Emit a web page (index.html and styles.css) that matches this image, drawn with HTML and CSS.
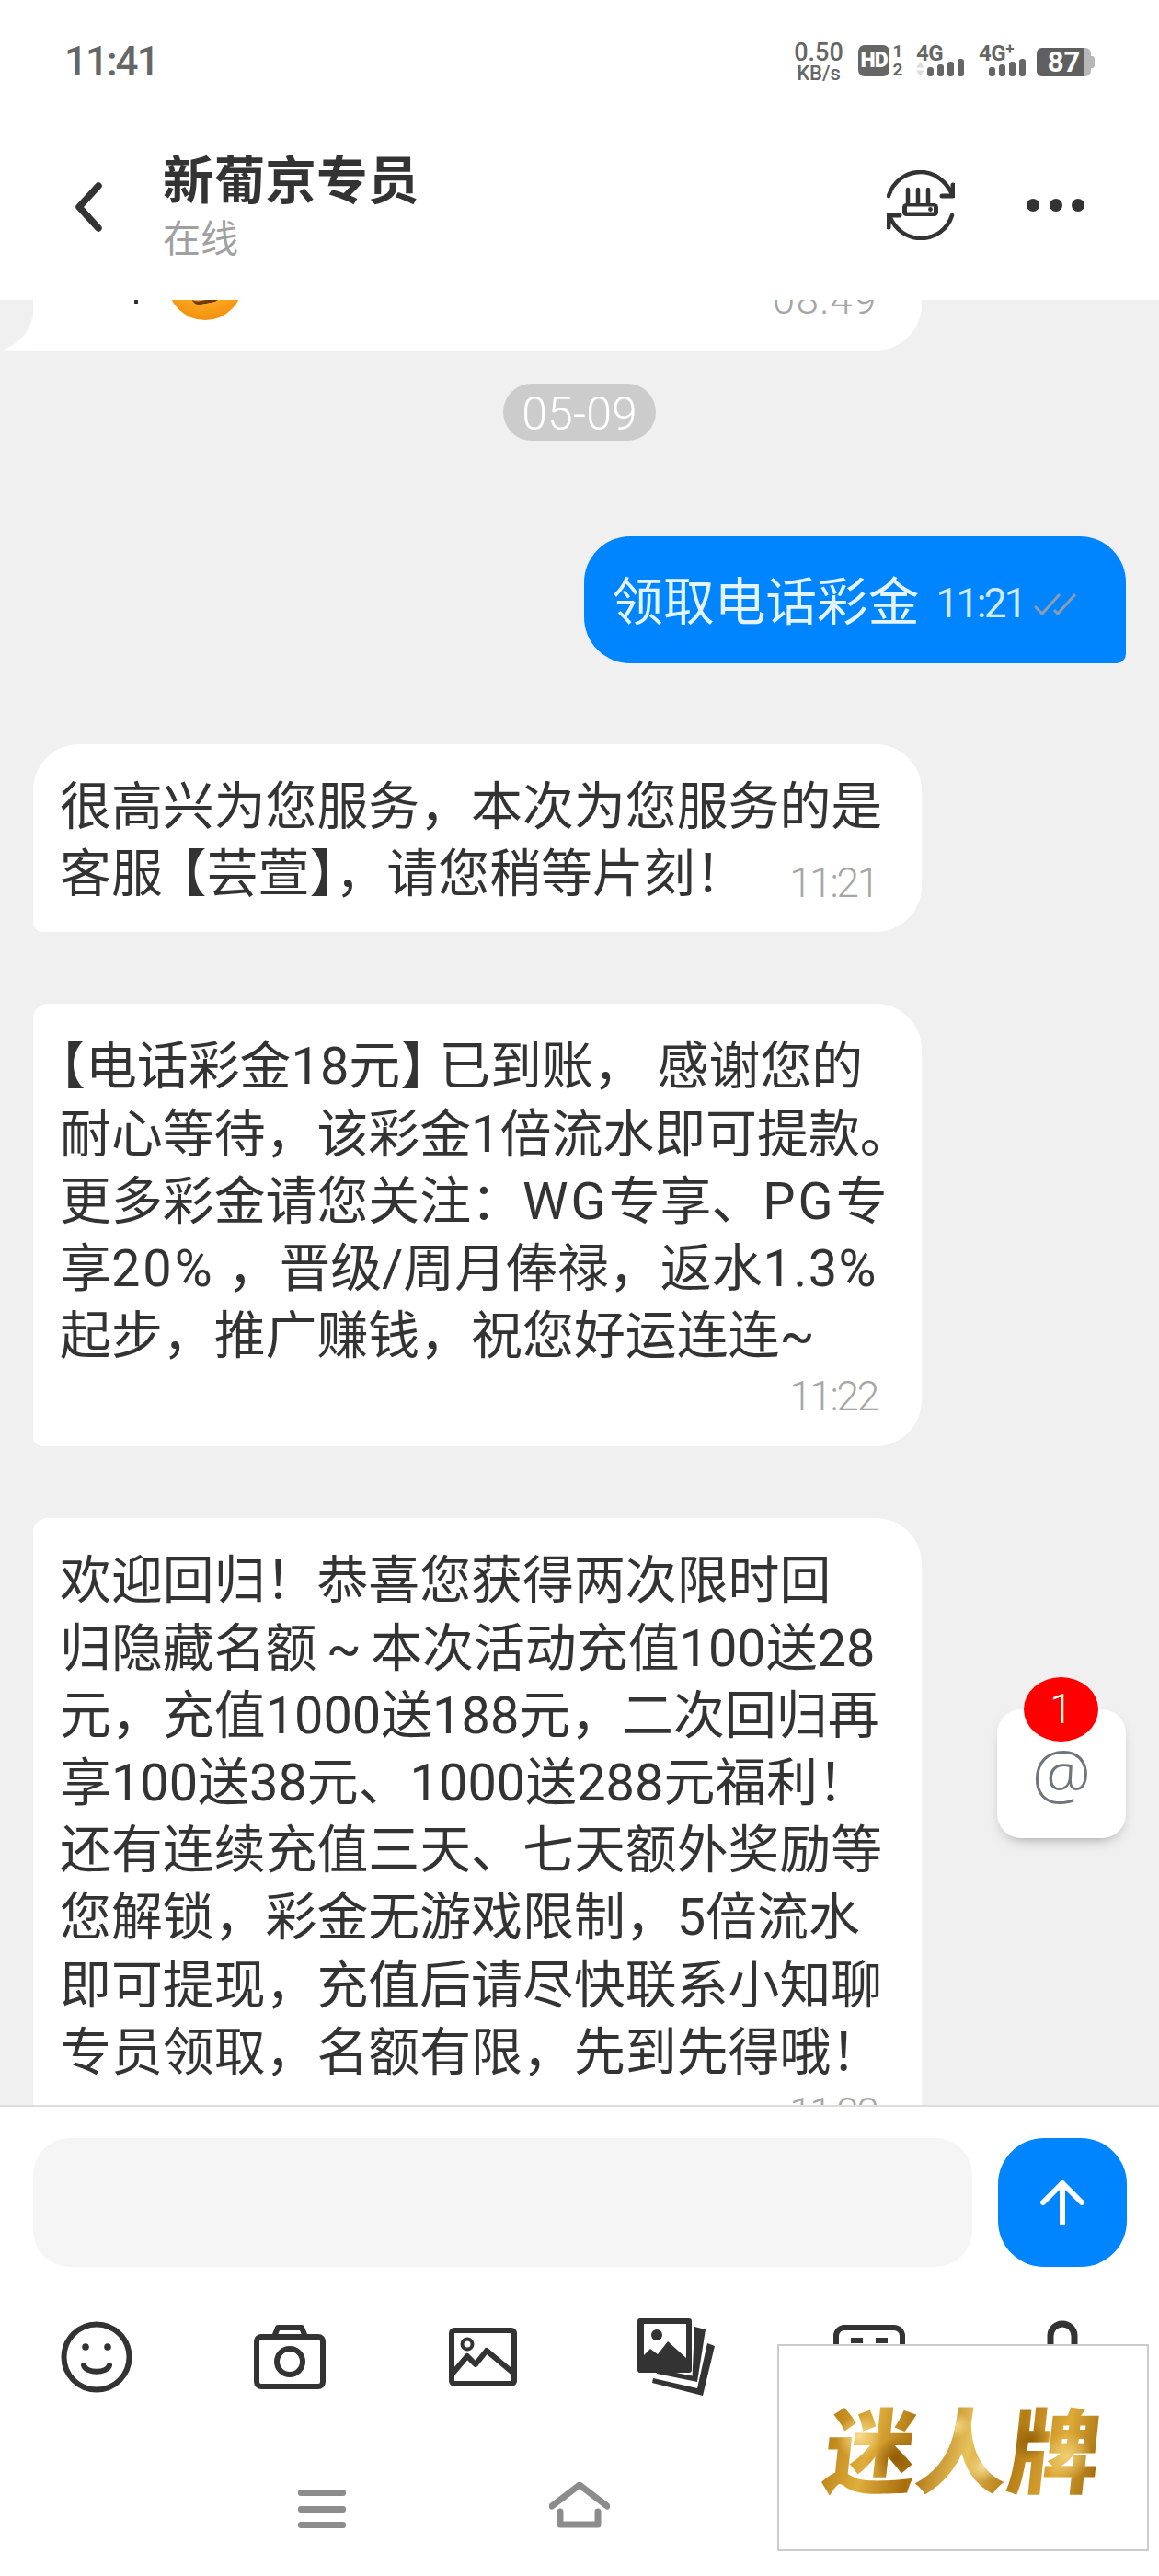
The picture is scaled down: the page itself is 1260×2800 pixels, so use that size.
FILE: index.html
```html
<!DOCTYPE html>
<html lang="zh-CN">
<head>
    <meta charset="UTF-8">
    <meta name="viewport" content="width=device-width, initial-scale=1.0">
    <title>新葡京专员</title>
    <link rel="stylesheet" href="styles.css">
</head>
<body>
    <div class="app">
        <header class="header">
            <div class="status-bar">
                <span class="clock">11:41</span>
                <div class="status-icons">
                    <div class="speed"><span>0.50</span><span class="speed-unit">KB/s</span></div>
                    <div class="hd"><span class="hd-box">HD</span><span class="hd-nums"><span>1</span><span>2</span></span></div>
                    <div class="signal signal-first">
                        <span class="net">4G</span>
                        <svg class="bars" width="52" height="34" viewBox="0 0 52 34">
                            <path d="M0 24.5l4.5-6 4.5 6zM0 27.5h9l-4.5 6z" fill="#dcdcdc"/>
                            <g fill="#666">
                                <rect x="12" y="24" width="7" height="10" rx="3"/>
                                <rect x="23" y="21" width="7" height="13" rx="3"/>
                                <rect x="34" y="18" width="7" height="16" rx="3"/>
                                <rect x="45" y="15" width="7" height="19" rx="3"/>
                            </g>
                        </svg>
                    </div>
                    <div class="signal">
                        <span class="net">4G<sup>+</sup></span>
                        <svg class="bars" width="41" height="34" viewBox="11 0 41 34">
                            <g fill="#666">
                                <rect x="12" y="24" width="7" height="10" rx="3"/>
                                <rect x="23" y="21" width="7" height="13" rx="3"/>
                                <rect x="34" y="18" width="7" height="16" rx="3"/>
                                <rect x="45" y="15" width="7" height="19" rx="3"/>
                            </g>
                        </svg>
                    </div>
                    <div class="battery"><span class="battery-level">87</span></div>
                </div>
            </div>
            <div class="top-bar">
                <svg class="back" width="32" height="54" viewBox="0 0 32 54">
                    <path d="M26 4L5 27l21 23" fill="none" stroke="#333" stroke-width="7.5" stroke-linecap="round" stroke-linejoin="round"/>
                </svg>
                <div class="peer">
                    <div class="peer-name">新葡京专员</div>
                    <div class="peer-state">在线</div>
                </div>
                <svg class="sync" width="74" height="76" viewBox="0 0 74 76">
                    <g fill="none" stroke="#333" stroke-width="4.5" stroke-linecap="round" stroke-linejoin="round">
                        <path d="M2 28C7 12 21 2 37 2c14 0 27 9 34 24"/>
                        <path d="M72 16v12H60" stroke-width="5"/>
                        <path d="M71 49C66 65 52 74 37 74 23 74 10 66 3 50"/>
                        <path d="M2 62V49h12" stroke-width="5"/>
                        <path d="M23 21v15M34 21v15M45 21v15"/>
                    </g>
                    <rect x="17" y="36" width="39" height="14" rx="4.5" fill="#333"/>
                    <rect x="22" y="39.5" width="29" height="6" fill="#fff"/>
                    <circle cx="47.5" cy="42.5" r="2.4" fill="#333"/>
                </svg>
                <div class="more"><i></i><i></i><i></i></div>
            </div>
        </header>

        <main class="chat">
            <div class="bubble bubble-prev">
                <span class="clip-dot"></span>
                <span class="emoji"><i></i></span>
                <span class="time time-prev">08:49</span>
                <svg class="tail" width="36" height="60" viewBox="0 0 36 60">
                    <path d="M36 0C36 24 30 50 0 59.5L36 60z" fill="#fff"/>
                </svg>
            </div>

            <div class="date-row"><span class="date">05-09</span></div>

            <div class="bubble-sent">
                <span class="sent-text">领取电话彩金</span>
                <span class="time time-sent">11:21</span>
                <svg class="ticks" width="46" height="24" viewBox="0 0 46 24">
                    <path d="M1 14l8 8L28 1M22 18l4 4L45 1" fill="none" stroke="#8c9cab" stroke-width="3"/>
                </svg>
            </div>

            <div class="bubble bubble-in first">
                很高兴为您服务，本次为您服务的是<br>
                <div class="last-line">
                    <span>客服<span class="bracket bracket-gap">【</span>芸萱<span class="bracket">】</span>，请您稍等片刻！</span>
                    <span class="time time-narrow">11:21</span>
                </div>
            </div>

            <div class="bubble bubble-in">
                <span class="bracket">【</span>电话彩金18元<span class="bracket bracket-after">】</span>已到账， 感谢您的<br>
                耐心等待，该彩金1倍流水即可提款。<br>
                更多彩金请您关注：<span class="latin-wide">WG</span>专享、<span class="latin-wide">PG</span>专<br>
                享<span class="latin-wide">20%</span> ，晋级/周月俸禄，返水<span class="latin-mid">1.3%</span><br>
                起步，推广赚钱，祝您好运连连~
                <div class="time-row"><span class="time time-narrow">11:22</span></div>
            </div>

            <div class="bubble bubble-in">
                欢迎回归！恭喜您获得两次限时回<br>
                归隐藏名额<span class="tilde"> ~ </span>本次活动充值100送28<br>
                元，充值1000送188元，二次回归再<br>
                享100送38元、1000送288元福利！<br>
                还有连续充值三天、七天额外奖励等<br>
                您解锁，彩金无游戏限制，5倍流水<br>
                即可提现，充值后请尽快联系小知聊<br>
                专员领取，名额有限，先到先得哦！
                <div class="time-row"><span class="time time-narrow">11:22</span></div>
            </div>

            <div class="mention">
                <span class="mention-badge">1</span>
                <span class="mention-at">@</span>
            </div>
        </main>

        <footer class="composer">
            <div class="input-row">
                <div class="input-box"></div>
                <div class="send">
                    <svg width="48" height="48" viewBox="0 0 48 48">
                        <path d="M24 46V3M3 24L24 3l21 21" fill="none" stroke="#fff" stroke-width="6" stroke-linecap="round" stroke-linejoin="round"/>
                    </svg>
                </div>
            </div>
            <div class="tools">
                <svg width="78" height="78" viewBox="0 0 78 78">
                    <circle cx="39" cy="39" r="35.5" fill="none" stroke="#333" stroke-width="6"/>
                    <circle cx="27" cy="28" r="3.8" fill="#333"/>
                    <circle cx="51" cy="28" r="3.8" fill="#333"/>
                    <path d="M25 48c3 9 25 9 28 0" fill="none" stroke="#333" stroke-width="6" stroke-linecap="round"/>
                </svg>
                <svg width="78" height="70" viewBox="0 0 78 70">
                    <rect x="3" y="13" width="72" height="54" rx="5" fill="none" stroke="#333" stroke-width="6"/>
                    <path d="M22 13l4-10h26l4 10" fill="none" stroke="#333" stroke-width="6" stroke-linejoin="round"/>
                    <circle cx="39" cy="40" r="14" fill="none" stroke="#333" stroke-width="6"/>
                </svg>
                <svg width="74" height="64" viewBox="0 0 74 64">
                    <rect x="3" y="3" width="68" height="58" rx="3" fill="none" stroke="#333" stroke-width="6"/>
                    <circle cx="20" cy="18" r="5.5" fill="none" stroke="#333" stroke-width="4"/>
                    <path d="M3 51l17-20 9 9 12-15 31 26" fill="none" stroke="#333" stroke-width="6" stroke-linejoin="round"/>
                </svg>
                <svg width="84" height="84" viewBox="0 0 84 84">
                    <path d="M62 9l12 3-9 57-44-9 .6-5 38 7.4z" fill="#333"/>
                    <path d="M76 27l8 3-13 54-55-14 1-5 48 11z" fill="#333"/>
                    <rect x="0" y="0" width="59" height="59" rx="3" fill="#333"/>
                    <rect x="7" y="6" width="46" height="37" fill="#fff"/>
                    <circle cx="21" cy="18" r="6" fill="#333"/>
                    <path d="M7 40l7-7 8 6 11-14 20 18v5H7z" fill="#333"/>
                </svg>
                <svg width="78" height="70" viewBox="0 0 78 70">
                    <rect x="3" y="3" width="72" height="60" rx="9" fill="none" stroke="#333" stroke-width="6"/>
                    <path d="M19 17h13M46 17h13" stroke="#333" stroke-width="6"/>
                </svg>
                <svg width="34" height="80" viewBox="0 0 34 80">
                    <path d="M4 60V17a13 13 0 0 1 26 0v43" fill="none" stroke="#333" stroke-width="7"/>
                </svg>
            </div>
            <div class="nav">
                <div class="nav-menu"><i></i><i></i><i></i></div>
                <svg width="66" height="50" viewBox="0 0 66 50">
                    <path d="M3 26L33 3l30 23" fill="none" stroke="#8c8c8c" stroke-width="7" stroke-linecap="round" stroke-linejoin="round"/>
                    <path d="M12 32v14h41V32" fill="none" stroke="#8c8c8c" stroke-width="7" stroke-linecap="round" stroke-linejoin="round"/>
                </svg>
                <span></span>
            </div>
        </footer>

        <div class="watermark"><span class="watermark-text">迷人牌</span></div>
    </div>
</body>
</html>
```

FILE: styles.css
```css
* {
    box-sizing: border-box;
}

body {
    margin: 0;
    background-color: #fff;
    color: #333;
    font-family: Roboto, "Noto Sans CJK SC", sans-serif;
}

.app {
    position: relative;
    display: flex;
    flex-direction: column;
    width: 1260px;
    height: 2800px;
    overflow: hidden;
}

/* header */
.header {
    height: 326px;
    flex-shrink: 0;
    background-color: #fff;
}

.status-bar {
    display: flex;
    align-items: center;
    justify-content: space-between;
    height: 132px;
    padding: 0 74px 0 70px;
    color: #666;
}

.clock {
    margin-top: 2px;
    font-size: 44px;
    font-weight: 500;
    letter-spacing: -2px;
}

.status-icons {
    display: flex;
    align-items: center;
    font-weight: 500;
}

.speed {
    display: flex;
    flex-direction: column;
    align-items: center;
    width: 56px;
    margin-top: 4px;
    font-size: 27px;
    line-height: 23px;
}

.speed-unit {
    font-size: 22px;
    line-height: 22px;
}

.hd {
    display: flex;
    align-items: center;
    margin-left: 15px;
}

.hd-box {
    width: 34px;
    height: 34px;
    border-radius: 7px;
    background-color: #666;
    color: #fff;
    font-size: 23px;
    font-weight: 900;
    line-height: 34px;
    text-align: center;
    letter-spacing: -1px;
}

.hd-nums {
    display: flex;
    flex-direction: column;
    width: 12px;
    margin-left: 3px;
    font-size: 19px;
    font-weight: 700;
    line-height: 20px;
    text-align: center;
}

.signal {
    position: relative;
    display: flex;
    justify-content: flex-end;
    width: 52px;
    height: 34px;
    margin-left: 14px;
}

.signal + .signal {
    width: 51px;
    margin-left: 16px;
}

.net {
    position: absolute;
    top: -3px;
    left: 0;
    font-size: 24px;
    font-weight: 700;
    line-height: 24px;
    letter-spacing: -0.5px;
}

.net sup {
    font-size: 17px;
    line-height: 0;
    vertical-align: 7px;
}

.battery {
    position: relative;
    width: 59px;
    height: 31px;
    margin-top: 3px;
    margin-left: 12px;
    border-radius: 6px;
    background-color: #b8b8b8;
}

.battery::after {
    content: "";
    position: absolute;
    top: 9px;
    right: -4px;
    width: 4px;
    height: 13px;
    border-radius: 0 3px 3px 0;
    background-color: #b8b8b8;
}

.battery-level {
    display: block;
    width: 51px;
    height: 31px;
    padding-left: 8px;
    border-radius: 6px 0 0 6px;
    background-color: #5f5f5f;
    color: #fff;
    font-size: 31px;
    font-weight: 700;
    line-height: 31px;
    text-align: center;
}

.top-bar {
    display: flex;
    align-items: center;
    height: 182px;
    padding-left: 81px;
}

.back {
    flex-shrink: 0;
    margin-top: 4px;
}

.peer {
    flex: 1;
    margin-left: 64px;
    padding-top: 8px;
}

.peer-name {
    color: #333;
    font-size: 55.7px;
    font-weight: 700;
    line-height: 66px;
}

.peer-state {
    color: #a0a0a0;
    font-size: 41px;
    font-weight: 400;
    line-height: 60px;
}

.sync {
    flex-shrink: 0;
}

.more {
    display: flex;
    gap: 10.5px;
    margin: 0 81px 0 78px;
}

.more i {
    width: 14px;
    height: 14px;
    border-radius: 50%;
    background-color: #333;
}

/* chat */
.chat {
    position: relative;
    flex: 1;
    display: flex;
    flex-direction: column;
    align-items: flex-start;
    min-height: 0;
    padding: 0 36px;
    overflow: hidden;
    background-color: #f0f0f0;
}

.bubble {
    flex-shrink: 0;
    position: relative;
    width: 966px;
    background-color: #fff;
}

.bubble-prev {
    display: flex;
    height: 115px;
    margin-top: -60px;
    border-radius: 0 0 50px 0;
}

.clip-dot {
    position: absolute;
    top: 60px;
    left: 110px;
    width: 4px;
    height: 4px;
    background-color: #333;
}

.emoji {
    position: absolute;
    top: 0;
    left: 146px;
    width: 82px;
    height: 82px;
    border-radius: 50%;
    background: radial-gradient(circle at 50% 30%, #ffc73a 0%, #fba21c 60%, #ea8200 100%);
}

.emoji i {
    position: absolute;
    top: 56px;
    left: 27px;
    width: 30px;
    height: 8px;
    border-bottom: 4px solid #6d3a08;
    border-radius: 0 0 20px 20px;
    transform: rotate(-10deg);
}

.tail {
    position: absolute;
    bottom: 0;
    left: -34px;
}

.time {
    color: #a6a6a6;
    font-size: 44px;
    font-weight: 300;
    line-height: 44px;
}

.time-prev {
    position: absolute;
    top: 38px;
    right: 48px;
    letter-spacing: 1.5px;
}

.time-narrow {
    letter-spacing: -2.2px;
}

.date-row {
    align-self: center;
    flex-shrink: 0;
    margin-top: 36px;
}

.date {
    display: block;
    height: 62px;
    padding: 0 20px;
    border-radius: 31px;
    background-color: #ccc;
    color: #fff;
    font-size: 50px;
    font-weight: 300;
    line-height: 66px;
}

.bubble-sent {
    align-self: flex-end;
    flex-shrink: 0;
    display: flex;
    align-items: center;
    height: 138px;
    margin-top: 104px;
    padding: 6px 54px 0 30px;
    border-radius: 50px 50px 10px 50px;
    background-color: #0085ff;
}

.sent-text {
    color: #e3f4ff;
    font-size: 55.7px;
    font-weight: 400;
    line-height: 73px;
}

.time-sent {
    margin-left: 18px;
    color: #cfeaff;
    font-weight: 400;
    letter-spacing: -2.6px;
    position: relative;
    top: 1px;
}

.ticks {
    margin-left: 10px;
    position: relative;
    top: 2px;
}

.bubble-in {
    margin-top: 78px;
    padding: 32px 30px 26px 29px;
    border-radius: 16px 50px 50px 10px;
    font-size: 55.9px;
    font-weight: 400;
    line-height: 73.2px;
    white-space: nowrap;
}

.bubble-in.first {
    margin-top: 88px;
    border-top-left-radius: 50px;
}

.bracket {
    font-feature-settings: "halt";
}

.bracket-gap {
    margin-left: 20px;
}

.bracket-after {
    margin-right: 14px;
}

.latin-wide {
    letter-spacing: 3px;
}

.latin-mid {
    letter-spacing: 1.5px;
}

.tilde {
    word-spacing: -3.5px;
}

.last-line {
    display: flex;
    align-items: center;
    justify-content: space-between;
    padding-right: 18px;
}

.last-line .time {
    position: relative;
    top: 9px;
}

.time-row {
    margin-top: 3px;
    padding-right: 18px;
    padding-bottom: 6px;
    text-align: right;
    line-height: 44px;
}

/* floating mention button */
.mention {
    position: absolute;
    top: 1532px;
    left: 1084px;
    width: 140px;
    height: 140px;
    border-radius: 26px;
    background-color: #fff;
    box-shadow: 0 7px 16px -9px rgba(0, 0, 0, 0.5);
    text-align: center;
}

.mention-badge {
    position: absolute;
    top: -35px;
    left: 29px;
    width: 81px;
    height: 70px;
    border-radius: 50%;
    background-color: #f00;
    color: #fff;
    font-size: 44px;
    font-weight: 300;
    line-height: 70px;
}

.mention-at {
    position: absolute;
    top: 26px;
    left: 0;
    right: 0;
    color: #6f757b;
    font-family: "Open Sans", sans-serif;
    font-size: 72px;
    font-weight: 300;
    line-height: 84px;
}

/* composer */
.composer {
    height: 512px;
    flex-shrink: 0;
    border-top: 2px solid #ddd;
    background-color: #fff;
}

.input-row {
    display: flex;
    gap: 28px;
    padding: 34px 35px 0 36px;
}

.input-box {
    flex: 1;
    height: 140px;
    border-radius: 40px;
    background-color: #f5f5f5;
}

.send {
    display: flex;
    align-items: center;
    justify-content: center;
    width: 140px;
    height: 140px;
    border-radius: 50px;
    background-color: #0085ff;
}

.tools {
    display: grid;
    grid-template-columns: repeat(6, 1fr);
    align-items: center;
    justify-items: center;
    height: 84px;
    margin-top: 56px;
}

.nav {
    display: grid;
    grid-template-columns: repeat(3, 280px);
    justify-content: center;
    align-items: center;
    justify-items: center;
    height: 50px;
    margin-top: 94px;
}

.nav-menu {
    display: flex;
    flex-direction: column;
    gap: 10.5px;
    width: 52px;
    margin-top: 8px;
}

.nav-menu i {
    height: 7px;
    border-radius: 3px;
    background-color: #8c8c8c;
}

/* watermark stamped over the bottom right corner */
.watermark {
    position: absolute;
    top: 2548px;
    left: 845px;
    display: flex;
    align-items: center;
    justify-content: center;
    padding-bottom: 4px;
    width: 404px;
    height: 225px;
    border: 2px solid #ccc;
    background-color: #fff;
}

.watermark-text {
    background:
        radial-gradient(circle at 12% 40%, #f6dd8c 0, transparent 9%),
        radial-gradient(circle at 26% 62%, #8f5a06 0, transparent 10%),
        radial-gradient(circle at 47% 30%, #f4d680 0, transparent 8%),
        radial-gradient(circle at 58% 70%, #f5dc94 0, transparent 9%),
        radial-gradient(circle at 74% 45%, #94600a 0, transparent 9%),
        radial-gradient(circle at 88% 60%, #f0cf72 0, transparent 10%),
        linear-gradient(100deg, #b57a10 0%, #e0ae3c 18%, #a86d0c 34%, #e8c25c 52%, #b47c14 68%, #deaa38 84%, #9c6508 100%);
    -webkit-background-clip: text;
    background-clip: text;
    color: transparent;
    font-family: "Noto Sans CJK SC", sans-serif;
    font-size: 100px;
    font-weight: 900;
    line-height: 110px;
    transform: skewX(-6deg);
}
```
